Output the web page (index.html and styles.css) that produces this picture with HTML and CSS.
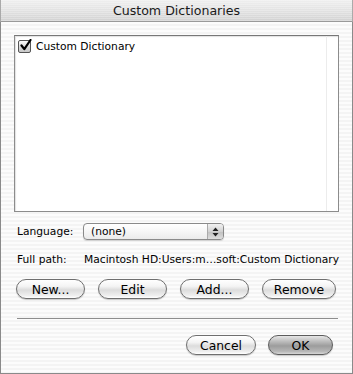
FILE: index.html
```html
<!DOCTYPE html>
<html>
<head>
<meta charset="utf-8">
<link rel="stylesheet" href="styles.css">
</head>
<body>
<div class="window">
  <div class="titlebar">Custom Dictionaries</div>
  <div class="content">
    <div class="listbox">
      <div class="list-item">
        <span class="checkbox">
          <svg width="13" height="13" viewBox="0 0 13 13"><path d="M2.5 6.5 L5.3 10.2 L11.5 1" fill="none" stroke="#000" stroke-width="2.2" stroke-linecap="round" stroke-linejoin="round"/></svg>
        </span>
        <span class="item-label">Custom Dictionary</span>
      </div>
      <div class="list-scrollline"></div>
    </div>
    <div class="row lang-row">
      <span class="label">Language:</span>
      <div class="popup">
        <span class="popup-text">(none)</span>
        <span class="popup-arrows">
          <svg width="7" height="10" viewBox="0 0 7 10"><path d="M3.5 0.5 L6.5 4 L0.5 4 Z M3.5 9.5 L6.5 6 L0.5 6 Z" fill="#222"/></svg>
        </span>
      </div>
    </div>
    <div class="row path-row">
      <span class="label">Full path:</span>
      <span class="path">Macintosh HD:Users:m…soft:Custom Dictionary</span>
    </div>
    <div class="buttons">
      <button class="btn w-new">New...</button>
      <button class="btn w-edit">Edit</button>
      <button class="btn w-add">Add...</button>
      <button class="btn w-remove">Remove</button>
    </div>
    <div class="separator"></div>
    <div class="buttons footer">
      <button class="btn w-cancel">Cancel</button>
      <button class="btn default w-ok">OK</button>
    </div>
  </div>
</div>
</body>
</html>
```

FILE: styles.css
```css
html, body {
  margin: 0;
  padding: 0;
  background: #fff;
}
body {
  font-family: "DejaVu Sans", "Liberation Sans", sans-serif;
  font-size: 10.7px;
  color: #000;
}
.window {
  width: 353px;
  height: 374px;
  box-sizing: border-box;
  border-left: 1px solid #8a8a8a;
  border-right: 1px solid #8a8a8a;
  border-bottom: 1px solid #8a8a8a;
  background: repeating-linear-gradient(to bottom, #f4f4f4 0px, #f4f4f4 2px, #fcfcfc 2px, #fcfcfc 4px);
  display: flex;
  flex-direction: column;
}
.titlebar {
  height: 22px;
  box-sizing: border-box;
  border-bottom: 1px solid #9a9a9a;
  background:
    repeating-linear-gradient(to bottom, rgba(255,255,255,0.25) 0px, rgba(255,255,255,0.25) 1px, rgba(0,0,0,0) 1px, rgba(0,0,0,0) 2px),
    linear-gradient(to bottom, #efefef 0%, #e2e2e2 50%, #d2d2d2 100%);
  text-align: center;
  font-size: 12.6px;
  line-height: 21px;
  color: #1a1a1a;
  margin: 0 -1px;
  border-left: 1px solid #aaa;
  border-right: 1px solid #aaa;
}
.content {
  padding: 13px 13px 0 13px;
  display: flex;
  flex-direction: column;
}
.listbox {
  height: 177px;
  width: 325px;
  box-sizing: border-box;
  background: #fff;
  border: 1px solid #8c8c8c;
  border-top-color: #777;
  box-shadow: inset 1px 1px 1px rgba(0,0,0,0.12);
  position: relative;
  padding: 2px 2px;
}
.list-scrollline {
  position: absolute;
  top: 0;
  bottom: 0;
  right: 11px;
  width: 1px;
  background: #ececec;
}
.list-item {
  display: flex;
  align-items: center;
  gap: 5px;
  height: 16px;
}
.checkbox {
  width: 13px;
  height: 13px;
  box-sizing: border-box;
  border: 1px solid #555;
  border-radius: 2px;
  background: linear-gradient(to bottom, #fdfdfd 0%, #d8d8d8 60%, #c8c8c8 100%);
  display: inline-flex;
  align-items: center;
  justify-content: center;
  margin-left: 1px;
  position: relative;
}
.checkbox svg {
  position: absolute;
  left: 0;
  top: -2px;
}
.row {
  display: flex;
  align-items: center;
  padding-left: 3px;
}
.lang-row {
  margin-top: 11px;
  height: 17px;
}
.lang-row .label {
  width: 66px;
}
.popup {
  width: 141px;
  height: 17px;
  box-sizing: border-box;
  border: 1px solid #8a8a8a;
  border-radius: 4px;
  background: linear-gradient(to bottom, #ffffff 0%, #f6f6f6 50%, #ebebeb 100%);
  display: flex;
  align-items: center;
  overflow: hidden;
  box-shadow: 0 1px 1px rgba(0,0,0,0.15);
}
.popup-text {
  flex: 1;
  padding-left: 7px;
}
.popup-arrows {
  width: 15px;
  height: 100%;
  border-left: 1px solid #aaa;
  background: linear-gradient(to bottom, #f2f2f2 0%, #d2d2d2 50%, #c0c0c0 51%, #dedede 100%);
  display: flex;
  align-items: center;
  justify-content: center;
}
.path-row {
  margin-top: 12px;
  height: 14px;
}
.path-row .label {
  width: 67px;
}
.buttons {
  display: flex;
  gap: 13px;
  margin-top: 13px;
  padding-left: 2px;
}
.btn {
  height: 20px;
  box-sizing: border-box;
  border: 1px solid #6f6f6f;
  border-radius: 10px;
  background: linear-gradient(to bottom, #ffffff 0%, #f4f4f4 35%, #dcdcdc 55%, #eeeeee 85%, #ffffff 100%);
  box-shadow: 0 1px 1px rgba(0,0,0,0.2);
  font-family: "DejaVu Sans", "Liberation Sans", sans-serif;
  font-size: 12.4px;
  color: #000;
  padding: 0;
  margin: 0;
  text-align: center;
  line-height: 17px;
}
.w-new { width: 69px; }
.w-edit { width: 69px; }
.w-add { width: 69px; }
.w-remove { width: 74px; }
.w-cancel { width: 70px; }
.w-ok { width: 65px; }
.btn.default {
  border-color: #5c5c5c;
  background: linear-gradient(to bottom, #e6e6e6 0%, #bdbdbd 30%, #9c9c9c 55%, #b6b6b6 85%, #d6d6d6 100%);
}
.separator {
  margin-top: 19px;
  margin-left: 3px;
  width: 321px;
  height: 1px;
  background: #8e8e8e;
}
.footer {
  margin-top: 16px;
  justify-content: flex-end;
  gap: 12px;
  padding-right: 6px;
}
```
